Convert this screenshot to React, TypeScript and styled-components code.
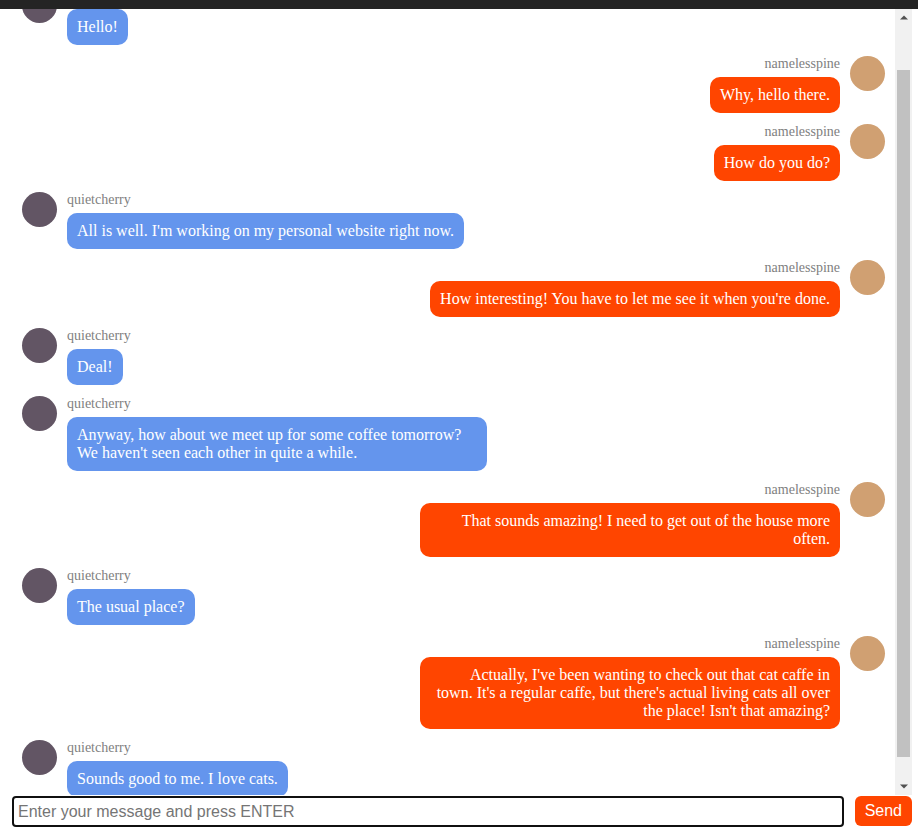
import React, { useEffect, useRef, useState } from "react";
import styled, { createGlobalStyle } from "styled-components";

const GlobalStyle = createGlobalStyle`
  html, body {
    margin: 0;
    padding: 0;
    background: #ffffff;
    font-family: "Liberation Serif", "Times New Roman", serif;
  }
  * { box-sizing: border-box; }
`;

type Side = "left" | "right";

interface Msg {
  user: string;
  side: Side;
  text: string;
}

const messages: Msg[] = [
  { user: "quietcherry", side: "left", text: "Hello!" },
  { user: "namelesspine", side: "right", text: "Why, hello there." },
  { user: "namelesspine", side: "right", text: "How do you do?" },
  { user: "quietcherry", side: "left", text: "All is well. I'm working on my personal website right now." },
  { user: "namelesspine", side: "right", text: "How interesting! You have to let me see it when you're done." },
  { user: "quietcherry", side: "left", text: "Deal!" },
  {
    user: "quietcherry",
    side: "left",
    text: "Anyway, how about we meet up for some coffee tomorrow? We haven't seen each other in quite a while.",
  },
  {
    user: "namelesspine",
    side: "right",
    text: "That sounds amazing! I need to get out of the house more often.",
  },
  { user: "quietcherry", side: "left", text: "The usual place?" },
  {
    user: "namelesspine",
    side: "right",
    text: "Actually, I've been wanting to check out that cat caffe in town. It's a regular caffe, but there's actual living cats all over the place! Isn't that amazing?",
  },
  { user: "quietcherry", side: "left", text: "Sounds good to me. I love cats." },
];

const Page = styled.div`
  display: flex;
  flex-direction: column;
  width: 100%;
`;

const TopBar = styled.div`
  height: 9px;
  background: #242424;
`;

const Main = styled.div`
  display: flex;
  height: 786px;
  padding: 0 6px;
`;

const ChatScroll = styled.div`
  flex: 1;
  min-width: 0;
  height: 100%;
  overflow-y: scroll;
  background: #ffffff;
  scrollbar-width: none;
  &::-webkit-scrollbar {
    display: none;
  }
`;

const ScrollTrack = styled.div`
  flex: 0 0 17px;
  width: 17px;
  height: 100%;
  display: flex;
  flex-direction: column;
  background: #f1f1f1;
`;

const ScrollButton = styled.div`
  flex: 0 0 17px;
  height: 17px;
  display: flex;
  align-items: center;
  justify-content: center;
  svg {
    display: block;
  }
`;

const ThumbArea = styled.div`
  flex: 1;
  display: flex;
  flex-direction: column;
  padding: 0 2px;
`;

const Thumb = styled.div`
  width: 100%;
  background: #c1c1c1;
`;

const MessageList = styled.div`
  display: flex;
  flex-direction: column;
  gap: 11px;
  padding: 29px 10px 22px 16px;
`;

const Row = styled.div<{ $side: Side }>`
  display: flex;
  flex-direction: ${(p) => (p.$side === "right" ? "row-reverse" : "row")};
  align-items: flex-start;
  gap: 10px;
`;

const Avatar = styled.div<{ $side: Side }>`
  flex: 0 0 35px;
  width: 35px;
  height: 35px;
  border-radius: 50%;
  background: ${(p) => (p.$side === "right" ? "#d0a072" : "#625564")};
`;

const Body = styled.div<{ $side: Side }>`
  display: flex;
  flex-direction: column;
  align-items: ${(p) => (p.$side === "right" ? "flex-end" : "flex-start")};
  min-width: 0;
`;

const Name = styled.div`
  font-size: 14px;
  line-height: 16px;
  color: #808080;
  margin-bottom: 5px;
`;

const Bubble = styled.div<{ $side: Side }>`
  max-width: 420px;
  padding: 9px 10px;
  border-radius: 10px;
  font-size: 16px;
  line-height: 18px;
  color: #ffffff;
  text-align: ${(p) => (p.$side === "right" ? "right" : "left")};
  background: ${(p) => (p.$side === "right" ? "#ff4500" : "#6495ed")};
`;

const InputBar = styled.div`
  display: flex;
  align-items: flex-start;
  gap: 11px;
  padding: 1px 6px 6px 12px;
`;

const MessageInput = styled.input`
  flex: 1;
  height: 31px;
  border: 2px solid #101010;
  border-radius: 4px;
  padding: 0 4px;
  font-family: "Liberation Sans", Arial, sans-serif;
  font-size: 16px;
  color: #000;
  outline: none;
  &::placeholder {
    color: #757575;
  }
`;

const SendButton = styled.button`
  height: 30px;
  padding: 0 10px;
  border: none;
  border-radius: 6px;
  background: #ff4500;
  color: #ffffff;
  font-family: "Liberation Sans", Arial, sans-serif;
  font-size: 16px;
  cursor: pointer;
`;

const Arrow = ({ dir }: { dir: "up" | "down" }) => (
  <svg width="8" height="5" viewBox="0 0 8 5">
    {dir === "up" ? (
      <polygon points="0,4.5 8,4.5 4,0.5" fill="#505050" />
    ) : (
      <polygon points="0,0.5 8,0.5 4,4.5" fill="#505050" />
    )}
  </svg>
);

export default function App() {
  const scrollRef = useRef<HTMLDivElement>(null);
  const [thumb, setThumb] = useState({ top: 0, height: 0, ratio: 1 });

  const update = () => {
    const el = scrollRef.current;
    if (!el) return;
    const trackLen = el.clientHeight - 34;
    const ratio = el.clientHeight / el.scrollHeight;
    setThumb({
      top: (trackLen * el.scrollTop) / el.scrollHeight,
      height: trackLen * ratio,
      ratio,
    });
  };

  useEffect(() => {
    if (scrollRef.current) {
      scrollRef.current.scrollTop = 50;
    }
    update();
  }, []);

  return (
    <Page>
      <GlobalStyle />
      <TopBar />
      <Main>
        <ChatScroll ref={scrollRef} onScroll={update}>
          <MessageList>
            {messages.map((m, i) => (
              <Row key={i} $side={m.side}>
                <Avatar $side={m.side} />
                <Body $side={m.side}>
                  <Name>{m.user}</Name>
                  <Bubble $side={m.side}>{m.text}</Bubble>
                </Body>
              </Row>
            ))}
          </MessageList>
        </ChatScroll>
        <ScrollTrack>
          <ScrollButton>
            <Arrow dir="up" />
          </ScrollButton>
          <ThumbArea>
            <Thumb style={{ marginTop: thumb.top, height: thumb.height }} />
          </ThumbArea>
          <ScrollButton>
            <Arrow dir="down" />
          </ScrollButton>
        </ScrollTrack>
      </Main>
      <InputBar>
        <MessageInput placeholder="Enter your message and press ENTER" />
        <SendButton>Send</SendButton>
      </InputBar>
    </Page>
  );
}
